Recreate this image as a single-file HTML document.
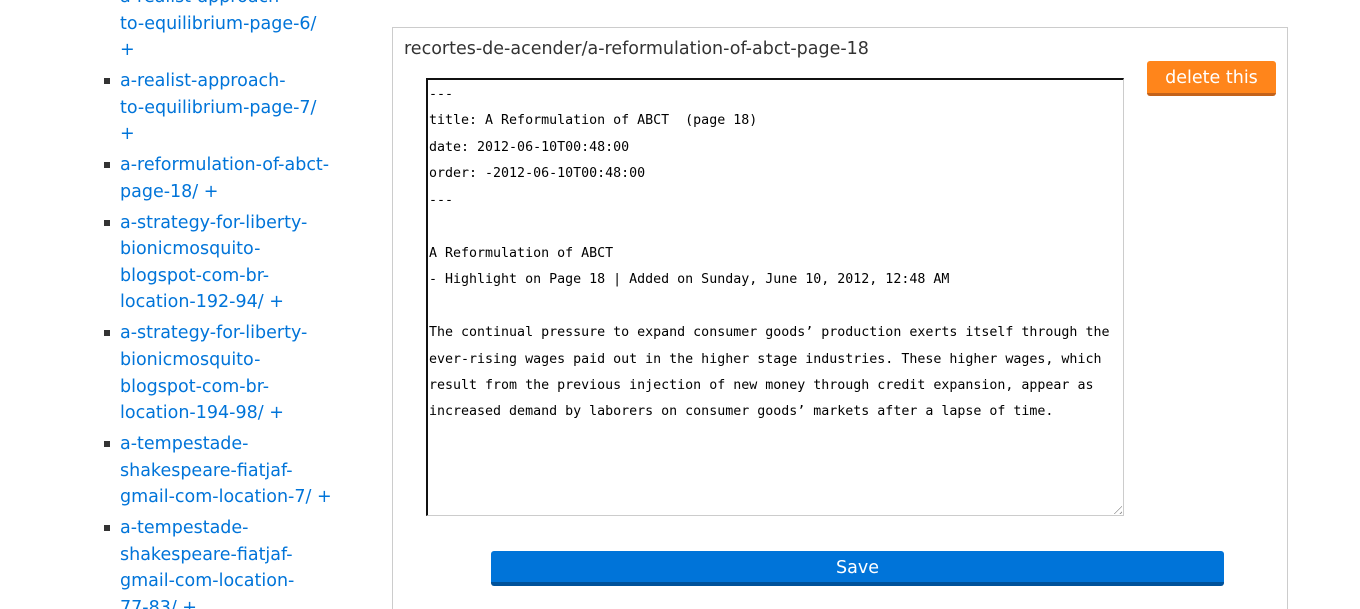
<!DOCTYPE html>
<html><head><meta charset="utf-8"><style>
html,body{margin:0;padding:0;background:#fff;width:1360px;height:609px;overflow:hidden;position:relative;font-family:"DejaVu Sans","Liberation Sans",sans-serif;}
ul{position:absolute;left:120px;top:-16px;width:225px;margin:0;padding:0;list-style:none;font-size:17.5px;line-height:26.6px;}
li{position:relative;margin-bottom:4.3px;color:#0074d9;white-space:nowrap;}
li::before{content:"";position:absolute;left:-16px;top:10px;width:6px;height:6px;background:#333;}
li.nb::before{display:none}
.panel{position:absolute;left:392px;top:27px;width:894px;height:620px;border:1px solid #ccc;}
.title{position:absolute;left:404px;top:39px;font-size:17.5px;color:#333;}
.ta{position:absolute;left:426px;top:78px;width:694px;height:433px;border-top:2px solid #111;border-left:2px solid #111;border-right:1px solid #ccc;border-bottom:1px solid #ccc;font-family:"DejaVu Sans Mono","Liberation Mono",monospace;font-size:13.3px;line-height:26.45px;color:#000;white-space:pre;padding:2px 0 0 1px;box-sizing:content-box;}
.grip{position:absolute;right:1px;bottom:1px;width:12px;height:12px;background:repeating-linear-gradient(135deg,transparent 0 3px,#999 3px 4px);clip-path:polygon(100% 0,100% 100%,0 100%);}
.del{position:absolute;left:1147px;top:61px;width:129px;height:32px;background:#ff851b;border-bottom:3px solid #c3621a;border-radius:3px;color:#fff;font-size:17.5px;text-align:center;line-height:34px;}
.save{position:absolute;left:491px;top:551px;width:733px;height:31px;background:#0074d9;border-bottom:4px solid #00529b;border-radius:3px;color:#fff;font-size:17.5px;text-align:center;line-height:34px;}
</style></head><body>
<ul>
<li class="nb">a-realist-approach-<br>to-equilibrium-page-6/<br>+</li>
<li>a-realist-approach-<br>to-equilibrium-page-7/<br>+</li>
<li>a-reformulation-of-abct-<br>page-18/ +</li>
<li>a-strategy-for-liberty-<br>bionicmosquito-<br>blogspot-com-br-<br>location-192-94/ +</li>
<li>a-strategy-for-liberty-<br>bionicmosquito-<br>blogspot-com-br-<br>location-194-98/ +</li>
<li>a-tempestade-<br>shakespeare-fiatjaf-<br>gmail-com-location-7/ +</li>
<li>a-tempestade-<br>shakespeare-fiatjaf-<br>gmail-com-location-<br>77-83/ +</li>
</ul>
<div class="panel"></div>
<div class="title">recortes-de-acender/a-reformulation-of-abct-page-18</div>
<div class="ta">---
title: A Reformulation of ABCT  (page 18)
date: 2012-06-10T00:48:00
order: -2012-06-10T00:48:00
---

A Reformulation of ABCT
- Highlight on Page 18 | Added on Sunday, June 10, 2012, 12:48 AM

The continual pressure to expand consumer goods’ production exerts itself through the
ever-rising wages paid out in the higher stage industries. These higher wages, which
result from the previous injection of new money through credit expansion, appear as
increased demand by laborers on consumer goods’ markets after a lapse of time.<div class="grip"></div></div>
<div class="del">delete this</div>
<div class="save">Save</div>
</body></html>
